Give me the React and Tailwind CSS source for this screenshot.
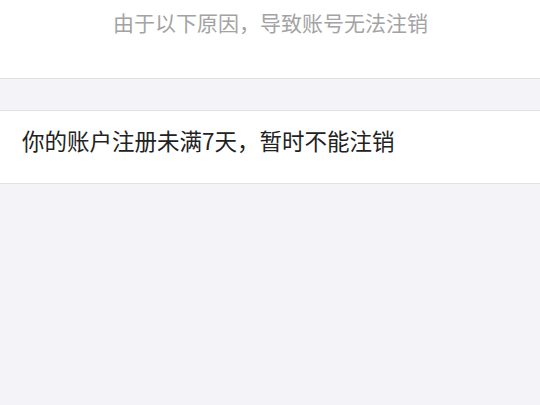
export default function App() {
  return (
    <div
      className="w-[540px] h-[405px] bg-[#f4f4f8] overflow-hidden"
      style={{ fontFamily: '"Noto Sans CJK SC", "Noto Sans", sans-serif' }}
    >
      <div className="h-[78px] bg-white flex justify-center pt-[7px]">
        <div className="text-[21px] leading-[30px] text-[#a3a3a3] pl-[1px]">由于以下原因，导致账号无法注销</div>
      </div>
      <div className="h-[33px] border-t border-b border-[#e2e2e4] bg-[#f4f4f8]" />
      <div className="h-[73px] bg-white border-b border-[#e2e2e4] flex items-start pt-[14px] px-[22px]">
        <div className="text-[22.5px] leading-[30px] text-[#222222]">你的账户注册未满7天，暂时不能注销</div>
      </div>
    </div>
  );
}
